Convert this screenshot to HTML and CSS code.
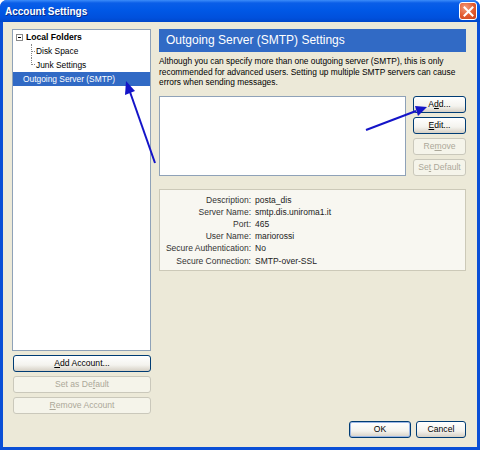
FILE: index.html
```html
<!DOCTYPE html>
<html>
<head>
<meta charset="utf-8">
<link rel="stylesheet" href="styles.css">
</head>
<body>
<div class="window">
  <div class="titlebar">
    <span class="title">Account Settings</span>
    <span class="close"><svg width="11" height="11" viewBox="0 0 11 11"><path d="M1.5 1.5 L9.5 9.5 M9.5 1.5 L1.5 9.5" stroke="#fff" stroke-width="2" stroke-linecap="square"/></svg></span>
  </div>
  <div class="client">
    <div class="main">
      <div class="left">
        <div class="tree">
          <div class="row root"><span class="expander"><span class="minus"></span></span><b>Local Folders</b></div>
          <div class="row child"><span class="branch"></span>Disk Space</div>
          <div class="row child last"><span class="branch"></span>Junk Settings</div>
          <div class="row selected">Outgoing Server (SMTP)</div>
        </div>
        <button class="btn wide first"><u>A</u>dd Account...</button>
        <button class="btn wide" disabled>Set as De<u>f</u>ault</button>
        <button class="btn wide" disabled><u>R</u>emove Account</button>
      </div>
      <div class="right">
        <div class="header">Outgoing Server (SMTP) Settings</div>
        <p class="desc">Although you can specify more than one outgoing server (SMTP), this is only recommended for advanced users. Setting up multiple SMTP servers can cause errors when sending messages.</p>
        <div class="listrow">
          <div class="listbox"></div>
          <div class="sidebtns">
            <button class="btn small">A<u>d</u>d...</button>
            <button class="btn small"><u>E</u>dit...</button>
            <button class="btn small" disabled>Re<u>m</u>ove</button>
            <button class="btn small" disabled>Se<u>t</u> Default</button>
          </div>
        </div>
        <div class="info">
          <div class="lbl">Description:</div><div class="val">posta_dis</div>
          <div class="lbl">Server Name:</div><div class="val">smtp.dis.uniroma1.it</div>
          <div class="lbl">Port:</div><div class="val">465</div>
          <div class="lbl">User Name:</div><div class="val">mariorossi</div>
          <div class="lbl">Secure Authentication:</div><div class="val">No</div>
          <div class="lbl">Secure Connection:</div><div class="val">SMTP-over-SSL</div>
        </div>
      </div>
    </div>
    <div class="footer">
      <button class="btn foot default">OK</button>
      <button class="btn foot">Cancel</button>
    </div>
  </div>
  <svg class="arrows" width="480" height="450" viewBox="0 0 480 450">
    <line x1="155" y1="163" x2="130" y2="92" stroke="#1414c8" stroke-width="2"/>
    <polygon points="126,81 125,95 135,91" fill="#1414c8"/>
    <line x1="366" y1="130" x2="416" y2="111" stroke="#1414c8" stroke-width="2"/>
    <polygon points="427,107 415,106 418,116" fill="#1414c8"/>
  </svg>
</div>
</body>
</html>
```
FILE: styles.css
```css
* { box-sizing: border-box; }
html, body { margin: 0; padding: 0; }
body { width: 480px; height: 450px; overflow: hidden; background: #fff; font-family: "Liberation Sans", Arial, sans-serif; font-size: 9px; color: #000; }
.window { position: relative; width: 480px; height: 450px; display: flex; flex-direction: column; background: #0a4fd6; border-radius: 7px 7px 0 0; overflow: hidden; }
.titlebar { height: 22px; flex: none; display: flex; align-items: center; justify-content: space-between; padding: 0 3px 0 5px; background: linear-gradient(#3c8cf9 0px, #0a5ee8 3px, #0058e6 10px, #0050dc 18px, #0047c9 22px); }
.title { color: #fff; font-weight: bold; font-size: 10px; text-shadow: 1px 1px 0 #0a2c8a; }
.close { width: 18px; height: 18px; border: 1px solid #fff; border-radius: 3px; background: radial-gradient(circle at 35% 30%, #f39c7c, #e25a2e 55%, #c8401a); display: flex; align-items: center; justify-content: center; }
.close svg { display: block; }
.client { flex: 1; margin: 0 3px 3px 3px; background: #ece9d8; display: flex; flex-direction: column; padding: 7px 11px 9px 9px; }
.main { flex: 1; display: flex; gap: 8px; }
.left { width: 139px; display: flex; flex-direction: column; }
.tree { flex: 1; background: #fff; border: 1px solid #8fa2b8; padding-top: 0; margin-bottom: 4px; font-size: 8.4px; }
.row { height: 14px; line-height: 14px; white-space: nowrap; position: relative; }
.root { padding-left: 3px; display: flex; align-items: center; }
.expander { width: 7px; height: 7px; border: 1px solid #8a8a8a; background: #fff; margin-right: 3px; position: relative; }
.minus { position: absolute; left: 1px; top: 2px; width: 3px; height: 1px; background: #000; }
.root b { font-size: 8.6px; }
.child { padding-left: 23px; }
.branch { position: absolute; left: 18px; top: 0; width: 4px; height: 7px; border-left: 1px dotted #888; border-bottom: 1px dotted #888; }
.child:not(.last) .branch { height: 14px; border-bottom: none; }
.child:not(.last)::after { content: ""; position: absolute; left: 18px; top: 7px; width: 4px; border-top: 1px dotted #888; }
.selected { background: #316ac5; color: #fff; padding-left: 10px; }
.btn { font-family: inherit; font-size: 8.6px; color: #000; padding: 0; border: 1px solid #003c74; border-radius: 3px; background: linear-gradient(#ffffff, #f4f3ee 60%, #d6d0c5); height: 17px; line-height: 15px; text-align: center; }
.btn:disabled { color: #aca899; border-color: #cac8bb; background: #f5f4ea; }
.btn.wide { width: 138px; margin-left: 1px; margin-top: 4px; }
.btn.wide.first { margin-top: 0; }
.right { flex: 1; display: flex; flex-direction: column; }
.header { height: 23px; background: #316ac5; color: #fff; font-size: 12px; line-height: 23px; padding-left: 7px; }
.desc { margin: 4px 0 0 0; line-height: 10.5px; font-size: 8.4px; }
.listrow { display: flex; margin-top: 8px; gap: 7px; }
.listbox { flex: 1; height: 80px; background: #fff; border: 1px solid #8fa2b8; }
.sidebtns { width: 53px; display: flex; flex-direction: column; gap: 4px; }
.btn.small { height: 17px; width: 53px; }
.info { margin-top: 13px; background: #f8f7f1; border: 1px solid #ccc9b8; display: grid; grid-template-columns: 91px 1fr; column-gap: 4px; padding: 4px 0 3px 0; line-height: 12.2px; font-size: 8.5px; }
.lbl { text-align: right; color: #333; }
.val { color: #222; }
.footer { flex: none; display: flex; justify-content: flex-end; gap: 5px; margin-top: 7px; height: 17px; }
.btn.foot { width: 62px; }
.btn.foot:last-child { width: 50px; }
.btn.default { box-shadow: inset 0 0 0 1px #9cb7e6; }
.arrows { position: absolute; left: 0; top: 0; pointer-events: none; }
```
